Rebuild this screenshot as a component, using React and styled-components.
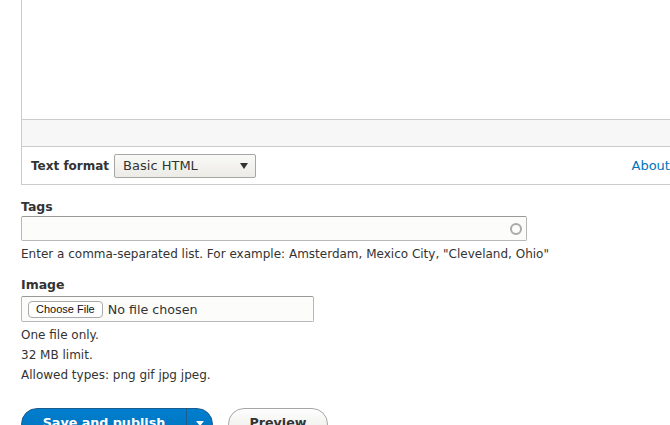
import React from "react";
import styled, { createGlobalStyle } from "styled-components";

const GlobalStyle = createGlobalStyle`
  html, body {
    margin: 0;
    padding: 0;
    background: #fff;
  }
  body {
    font-family: "DejaVu Sans", "Liberation Sans", sans-serif;
    color: #333;
  }
`;

const Page = styled.div`
  width: 670px;
  height: 425px;
  overflow: hidden;
  padding-left: 21px;
  box-sizing: border-box;
`;

const Editor = styled.div`
  width: 744px;
  border: 1px solid #ccc;
  border-top: none;
  box-sizing: border-box;
`;

const EditArea = styled.div`
  height: 119px;
  background: #fff;
`;

const StatusBar = styled.div`
  height: 26px;
  background: #f7f7f7;
  border-top: 1px solid #ccc;
  border-bottom: 1px solid #ccc;
`;

const FormatRow = styled.div`
  display: flex;
  align-items: center;
  height: 37px;
  padding: 0 10px 0 9px;
`;

const FormatLabel = styled.label`
  font-size: 12px;
  font-weight: bold;
  margin-right: 5px;
`;

const Select = styled.div`
  display: flex;
  align-items: center;
  justify-content: space-between;
  width: 142px;
  height: 24px;
  box-sizing: border-box;
  padding: 0 7px 0 8px;
  border: 1px solid #a6a6a6;
  border-radius: 2px;
  background: linear-gradient(#f9f9f7, #ecebe6);
  font-size: 13px;
  color: #333;
`;

const Arrow = styled.span`
  width: 0;
  height: 0;
  border-left: 4.5px solid transparent;
  border-right: 4.5px solid transparent;
  border-top: 6px solid #333;
  margin-top: 1px;
`;

const AboutLink = styled.a`
  margin-left: auto;
  font-size: 13px;
  color: #0074bd;
  text-decoration: none;
  white-space: nowrap;
`;

const Field = styled.div`
  margin-top: ${(p) => p.$top}px;
`;

const Label = styled.div`
  font-size: 12.5px;
  font-weight: bold;
  line-height: 15px;
  margin-bottom: ${(p) => p.$gap || 2}px;
`;

const TextInput = styled.div`
  position: relative;
  width: ${(p) => p.$width}px;
  height: ${(p) => p.$height}px;
  box-sizing: border-box;
  border: 1px solid #b8b8b8;
  border-top-color: #999;
  border-radius: 2px;
  background: #fcfcfa;
  display: flex;
  align-items: center;
`;

const Throbber = styled.span`
  position: absolute;
  right: 4px;
  top: 6px;
  width: 8px;
  height: 8px;
  border: 2px solid #aaa;
  border-radius: 50%;
`;

const Description = styled.div`
  font-size: 12px;
  line-height: 20px;
  color: #333;
  margin-top: ${(p) => p.$top || 0}px;
`;

const ChooseButton = styled.span`
  margin-left: 6px;
  height: 17px;
  padding: 0 7px;
  box-sizing: border-box;
  display: inline-flex;
  align-items: center;
  border: 1px solid #aaa;
  border-radius: 4px;
  background: #fff;
  font-family: "Liberation Sans", sans-serif;
  font-size: 11px;
  color: #111;
`;

const FileName = styled.span`
  margin-left: 5px;
  font-size: 12.7px;
  color: #333;
`;

const Actions = styled.div`
  display: flex;
  gap: 15px;
  margin-top: 23px;
`;

const Primary = styled.div`
  display: flex;
  height: 32px;
  width: 192px;
  border-radius: 16px;
  background: linear-gradient(#007ecd, #0074bd);
  border: 1px solid #1e5c90;
  box-sizing: border-box;
  overflow: hidden;
  color: #fff;
  font-weight: bold;
  font-size: 12.7px;
`;

const PrimaryLabel = styled.div`
  width: 164px;
  text-align: center;
  padding-top: 6px;
  border-right: 1px solid #1e5c90;
`;

const Toggle = styled.div`
  flex: 1;
  display: flex;
  justify-content: center;
  padding-top: 12px;
`;

const ToggleArrow = styled.span`
  width: 0;
  height: 0;
  border-left: 4.5px solid transparent;
  border-right: 4.5px solid transparent;
  border-top: 5px solid #fff;
`;

const Secondary = styled.div`
  height: 32px;
  width: 100px;
  box-sizing: border-box;
  border: 1px solid #a6a6a6;
  border-radius: 16px;
  background: linear-gradient(#fefefe, #e8e8e4);
  text-align: center;
  padding-top: 6px;
  font-weight: bold;
  font-size: 12.7px;
  color: #333;
`;

export default function App() {
  return (
    <Page>
      <GlobalStyle />
      <Editor>
        <EditArea />
        <StatusBar />
        <FormatRow>
          <FormatLabel>Text format</FormatLabel>
          <Select>
            Basic HTML
            <Arrow />
          </Select>
          <AboutLink href="#">About text formats</AboutLink>
        </FormatRow>
      </Editor>

      <Field $top={14}>
        <Label>Tags</Label>
        <TextInput $width={506} $height={25}>
          <Throbber />
        </TextInput>
        <Description $top={3}>
          Enter a comma-separated list. For example: Amsterdam, Mexico City, "Cleveland, Ohio"
        </Description>
      </Field>

      <Field $top={13}>
        <Label $gap={4}>Image</Label>
        <TextInput $width={293} $height={26}>
          <ChooseButton>Choose File</ChooseButton>
          <FileName>No file chosen</FileName>
        </TextInput>
        <Description $top={3}>One file only.</Description>
        <Description>32 MB limit.</Description>
        <Description>Allowed types: png gif jpg jpeg.</Description>
      </Field>

      <Actions>
        <Primary>
          <PrimaryLabel>Save and publish</PrimaryLabel>
          <Toggle>
            <ToggleArrow />
          </Toggle>
        </Primary>
        <Secondary>Preview</Secondary>
      </Actions>
    </Page>
  );
}
